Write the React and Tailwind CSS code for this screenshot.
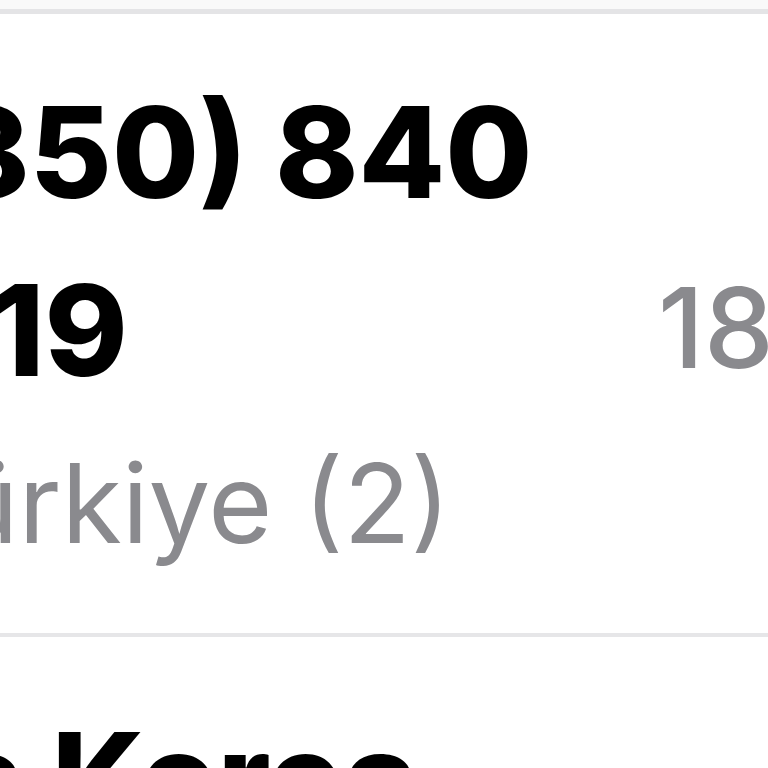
import React from "react";

const font = { fontFamily: "Inter, 'Noto Sans', 'Liberation Sans', sans-serif" };

function CallRow({ title, subtitle, time }) {
  return (
    <div className="flex pt-[49px] pb-[75px]">
      <div className="w-[658px] shrink-0">
        <div className="text-[126px] leading-[178px] font-extrabold text-black whitespace-nowrap">
          <div className="-ml-[102px]">{title[0]}</div>
          <div className="-ml-[147px]">{title[1]}</div>
        </div>
        <div className="mt-[29px] -ml-[112px] text-[110px] leading-[110px] text-[#8a8a8e] whitespace-nowrap">
          {subtitle}
        </div>
      </div>
      <div className="mt-[209px] text-[111px] leading-[111px] font-medium text-[#8a8a8e] whitespace-nowrap">
        {time}
      </div>
    </div>
  );
}

export default function App() {
  return (
    <div className="w-[768px] h-[768px] overflow-hidden bg-white" style={font}>
      <div className="h-[9px] bg-[#f9f9f9]" />
      <div className="h-[5px] bg-[#e4e4e6]" />
      <CallRow title={["(850) 840", "2119"]} subtitle="Türkiye (2)" time="18:42" />
      <div className="h-[4px] bg-[#e6e6e8]" />
      <div className="pt-[52px] -ml-[50px] text-[126px] leading-[178px] font-extrabold text-black whitespace-nowrap">
        a Korea
      </div>
    </div>
  );
}
